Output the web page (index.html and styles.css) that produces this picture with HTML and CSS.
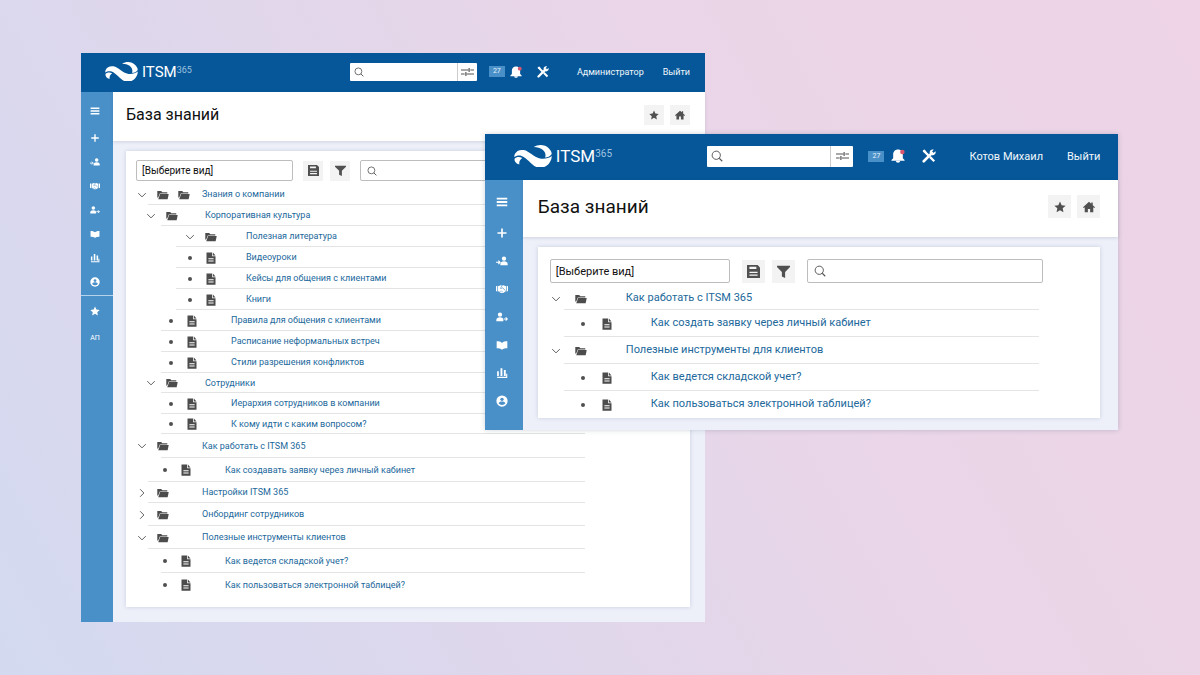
FILE: index.html
```html
<!DOCTYPE html>
<html lang="ru">
<head>
<meta charset="utf-8">
<meta name="viewport" content="width=device-width, initial-scale=1">
<title>ITSM 365 — База знаний</title>
<link rel="stylesheet" href="styles.css">
</head>
<body>
<svg class="sprite" aria-hidden="true">
  <symbol id="logo" viewBox="0 0 112 68">
    <path d="M2 27C6 18 16 13 28 15c18 3 30 23 52 26 12 1 24-1 32-8-1 21-16 35-36 35C54 67 42 40 22 33 14 30 6 32 0 36c0-4 1-7 2-9Z" fill="#fff"/>
    <path d="M1 41c5-6 15-7 23-2-6 4-10 10-9 19C6 56 0 49 1 41Z" fill="#fff"/>
    <path d="M58 6C72-3 92-2 103 10c7 8 10 13 8 18-5 6-11 9-19 9C98 22 84 6 58 6Z" fill="#fff"/>
  </symbol>
  <symbol id="search" viewBox="0 0 16 16"><circle cx="7" cy="7" r="5.5" fill="none" stroke="currentColor" stroke-width="1.3"/><path d="m11 11 4 4" stroke="currentColor" stroke-width="1.5"/></symbol>
  <symbol id="sliders" viewBox="0 0 16 12"><path d="M0 3.5h9M11.500 3.500H16M10 1v5M0 8.500h4.500M7 8.500h9M6 6v5" fill="none" stroke="currentColor" stroke-width="1.400"/></symbol>
  <symbol id="bell" viewBox="0 0 16 16"><path d="M8 .5c-3.500 0-5.500 2.500-5.500 5.500v4.500L.5 12.500V13.500h15v-1L13.500 10.500V6C13.500 3 11.500.5 8 .5Z" fill="currentColor"/><path d="M5.500 13.500h5c0 3-5 3-5 0Z" fill="currentColor"/><circle cx="13" cy="3.500" r="2.600" fill="#d9566f"/></symbol>
  <symbol id="tools" viewBox="0 0 16 16"><path d="m2.500 2.500 4.800 4.800M9 9l5 5" stroke="currentColor" stroke-width="2.600"/><path d="M1 1.500 3 .5l2 2.500-1.500 1.500L1 3Z" fill="currentColor"/><path d="M2 14 11.500 4.500" stroke="currentColor" stroke-width="3" stroke-linecap="round"/><path d="M13.500.7 11.300 3l.5 1.300 1.300.4L15.400 2.500c1 3-1.500 5.500-4.400 4.500L9 5C8 2 10.500-.2 13.500.7Z" fill="currentColor"/></symbol>
  <symbol id="menu" viewBox="0 0 16 16"><path d="M1 3.500h14M1 8h14M1 12.500h14" stroke="currentColor" stroke-width="2.400"/></symbol>
  <symbol id="plus" viewBox="0 0 16 16"><path d="M8 2v12M2 8h12" stroke="currentColor" stroke-width="2.200"/></symbol>
  <symbol id="user-in" viewBox="0 0 18 16"><circle cx="12" cy="4.500" r="3.200" fill="currentColor"/><path d="M6.500 14.500v-2c0-2.500 2.500-4 5.500-4s5.500 1.500 5.500 4v2Z" fill="currentColor"/><path d="M0 10h5M3.500 7.500 6 10l-2.500 2.500" fill="none" stroke="currentColor" stroke-width="1.600"/></symbol>
  <symbol id="user-out" viewBox="0 0 18 16"><circle cx="6" cy="4.500" r="3.200" fill="currentColor"/><path d="M.5 14.500v-2c0-2.500 2.500-4 5.500-4s5 1.500 5 4v2Z" fill="currentColor"/><path d="M11.500 11H17M14.500 8.500 17 11l-2.500 2.500" fill="none" stroke="currentColor" stroke-width="1.600"/></symbol>
  <symbol id="hands" viewBox="0 0 18 16"><path d="m0 4 2-1v9l-2-1ZM18 4l-2-1v9l2-1ZM3 4l4-1.500 2 .8 2-.8L15 4v7l-4 3H7l-4-3Z" fill="currentColor"/><path d="M9 3.500 6.500 7c1.500 1 3-.5 3.500-1l4 4.500M7 13l-1.500-2M10 13l-2-2.500" fill="none" stroke="#4a90c8"/></symbol>
  <symbol id="book" viewBox="0 0 18 16"><path d="M1 2.500c3 0 6 .5 8 2.500 2-2 5-2.500 8-2.500V13c-3 0-6 .5-8 2-2-1.500-5-2-8-2Z" fill="currentColor"/></symbol>
  <symbol id="chart" viewBox="0 0 16 16"><path d="M1.500 5.500h2.300V12H1.500ZM6 1.500h2.500V12H6ZM10.500 4H13v8h-2.500ZM1.500 13h13v1.700h-13ZM13.500 9H15v5.700h-1.500Z" fill="currentColor"/></symbol>
  <symbol id="account" viewBox="0 0 16 16"><circle cx="8" cy="8" r="7.500" fill="currentColor"/><circle cx="8" cy="5.700" r="2.200" fill="#4a90c8"/><path d="M3.500 11c1-3.300 8-3.300 9 0-2 3-7 3-9 0Z" fill="#4a90c8"/></symbol>
  <symbol id="star" viewBox="0 0 16 16"><path d="m8 .8 2.200 4.800 5.300.6-3.900 3.600 1 5.200L8 12.400 3.400 15l1-5.200L.5 6.200l5.300-.6Z" fill="currentColor"/></symbol>
  <symbol id="home" viewBox="0 0 16 16"><path d="M8 1 0 8.300l1 1.100 1.300-1.100V15h4.200v-4.500h3V15h4.200V8.300L15 9.400l1-1.100-3-2.700V2h-2v1.700Z" fill="currentColor"/></symbol>
  <symbol id="save" viewBox="0 0 16 16"><path d="M0 0h13L16 3v13H0Z" fill="currentColor"/><path d="M3 2h8.500v2.800H3ZM3 8.300h10v1.500H3ZM3 11.800h10v1.500H3Z" fill="#f6f6f6"/></symbol>
  <symbol id="filter" viewBox="0 0 16 16"><path d="M0 1h16v1.500L10 8.500V16l-4-2V8.500L0 2.500Z" fill="currentColor"/></symbol>
  <symbol id="folder" viewBox="0 0 16 14"><path d="M0 1.500h5.500L7 3h7v2H3.500L1.500 10 0 11Z" fill="currentColor"/><path d="M4 5.700h12L14.500 13H1.300Z" fill="currentColor"/></symbol>
  <symbol id="doc" viewBox="0 0 14 16"><path d="M1 .5h7.500V5.500H13V15.500H1Z" fill="currentColor"/><path d="M9.500.8 13 4.500H9.500Z" fill="currentColor"/><path d="M3.500 8.200h7v1.300h-7ZM3.500 11.300h7v1.300h-7Z" fill="#fff"/></symbol>
  <symbol id="down" viewBox="0 0 16 16"><path d="m2 5 6 6 6-6" fill="none" stroke="currentColor" stroke-width="1.500"/></symbol>
  <symbol id="right" viewBox="0 0 16 16"><path d="m5 2 6 6-6 6" fill="none" stroke="currentColor" stroke-width="1.500"/></symbol>
</svg>

<main class="desktop">
  <section class="window window--admin" aria-label="База знаний, администратор">
    <header class="topbar">
      <a class="brand" href="#"><svg class="brand-mark"><use href="#logo"/></svg><span class="brand-name">ITSM</span><span class="brand-suffix">365</span></a>
      <form class="quick-search">
        <svg class="search-icon"><use href="#search"/></svg>
        <input class="quick-input" type="search" aria-label="Поиск">
        <button class="quick-options" type="button" aria-label="Параметры поиска"><svg class="sliders"><use href="#sliders"/></svg></button>
      </form>
      <span class="badge">27</span>
      <button class="top-button top-button--bell" type="button" aria-label="Уведомления"><svg class="top-icon"><use href="#bell"/></svg></button>
      <button class="top-button top-button--tools" type="button" aria-label="Настройки"><svg class="top-icon"><use href="#tools"/></svg></button>
      <a class="top-link top-link--user" href="#">Администратор</a>
      <a class="top-link" href="#">Выйти</a>
    </header>
    <div class="workspace">
      <nav class="sidebar" aria-label="Разделы">
        <button class="side-button side-button--menu" type="button" aria-label="Меню"><svg class="side-icon"><use href="#menu"/></svg></button>
        <button class="side-button" type="button" aria-label="Добавить"><svg class="side-icon"><use href="#plus"/></svg></button>
        <button class="side-button" type="button" aria-label="Входящие"><svg class="side-icon"><use href="#user-in"/></svg></button>
        <button class="side-button" type="button" aria-label="Соглашения"><svg class="side-icon"><use href="#hands"/></svg></button>
        <button class="side-button" type="button" aria-label="Исходящие"><svg class="side-icon"><use href="#user-out"/></svg></button>
        <button class="side-button" type="button" aria-label="Справочник"><svg class="side-icon"><use href="#book"/></svg></button>
        <button class="side-button" type="button" aria-label="Отчёты"><svg class="side-icon"><use href="#chart"/></svg></button>
        <button class="side-button" type="button" aria-label="Профиль"><svg class="side-icon"><use href="#account"/></svg></button>
        <div class="side-extra">
          <button class="side-button" type="button" aria-label="Избранное"><svg class="side-icon"><use href="#star"/></svg></button>
          <button class="side-button side-button--text" type="button">АП</button>
        </div>
      </nav>
      <div class="page">
        <div class="page-head">
          <h1 class="page-title">База знаний</h1>
          <button class="tile" type="button" aria-label="В избранное"><svg class="tile-icon"><use href="#star"/></svg></button>
          <button class="tile" type="button" aria-label="Домой"><svg class="tile-icon"><use href="#home"/></svg></button>
        </div>
        <div class="card">
          <div class="toolbar">
            <select class="view-select" aria-label="Вид"><option>[Выберите вид]</option></select>
            <div class="tool-group">
              <button class="tile" type="button" aria-label="Сохранить вид"><svg class="tile-icon"><use href="#save"/></svg></button>
              <button class="tile" type="button" aria-label="Фильтр"><svg class="tile-icon"><use href="#filter"/></svg></button>
            </div>
            <div class="tree-search"><svg class="search-icon"><use href="#search"/></svg><input class="tree-input" type="search" aria-label="Поиск по базе знаний"></div>
          </div>
          <ul class="tree">
            <li class="row"><button class="toggle" type="button" aria-label="Свернуть"><svg class="chevron"><use href="#down"/></svg></button><span class="icons"><svg class="folder"><use href="#folder"/></svg><svg class="folder"><use href="#folder"/></svg></span><a class="label" href="#">Знания о компании</a></li>
            <li class="row row--sub"><button class="toggle" type="button" aria-label="Свернуть"><svg class="chevron"><use href="#down"/></svg></button><span class="icons"><svg class="folder"><use href="#folder"/></svg></span><a class="label" href="#">Корпоративная культура</a></li>
            <li class="row row--deep"><button class="toggle" type="button" aria-label="Свернуть"><svg class="chevron"><use href="#down"/></svg></button><span class="icons"><svg class="folder"><use href="#folder"/></svg></span><a class="label" href="#">Полезная литература</a></li>
            <li class="row row--deep"><span class="dot"></span><span class="icons"><svg class="doc"><use href="#doc"/></svg></span><a class="label" href="#">Видеоуроки</a></li>
            <li class="row row--deep"><span class="dot"></span><span class="icons"><svg class="doc"><use href="#doc"/></svg></span><a class="label" href="#">Кейсы для общения с клиентами</a></li>
            <li class="row row--deep"><span class="dot"></span><span class="icons"><svg class="doc"><use href="#doc"/></svg></span><a class="label" href="#">Книги</a></li>
            <li class="row row--subdoc"><span class="dot"></span><span class="icons"><svg class="doc"><use href="#doc"/></svg></span><a class="label" href="#">Правила для общения с клиентами</a></li>
            <li class="row row--subdoc"><span class="dot"></span><span class="icons"><svg class="doc"><use href="#doc"/></svg></span><a class="label" href="#">Расписание неформальных встреч</a></li>
            <li class="row row--subdoc"><span class="dot"></span><span class="icons"><svg class="doc"><use href="#doc"/></svg></span><a class="label" href="#">Стили разрешения конфликтов</a></li>
            <li class="row row--sub row--tight"><button class="toggle" type="button" aria-label="Свернуть"><svg class="chevron"><use href="#down"/></svg></button><span class="icons"><svg class="folder"><use href="#folder"/></svg></span><a class="label" href="#">Сотрудники</a></li>
            <li class="row row--subdoc"><span class="dot"></span><span class="icons"><svg class="doc"><use href="#doc"/></svg></span><a class="label" href="#">Иерархия сотрудников в компании</a></li>
            <li class="row row--subdoc row--tight"><span class="dot"></span><span class="icons"><svg class="doc"><use href="#doc"/></svg></span><a class="label" href="#">К кому идти с каким вопросом?</a></li>
            <li class="row row--tall row--open"><button class="toggle" type="button" aria-label="Свернуть"><svg class="chevron"><use href="#down"/></svg></button><span class="icons"><svg class="folder"><use href="#folder"/></svg></span><a class="label" href="#">Как работать с ITSM 365</a></li>
            <li class="row row--doc row--tall row--end"><span class="dot"></span><span class="icons"><svg class="doc"><use href="#doc"/></svg></span><a class="label" href="#">Как создавать заявку через личный кабинет</a></li>
            <li class="row"><button class="toggle" type="button" aria-label="Развернуть"><svg class="chevron"><use href="#right"/></svg></button><span class="icons"><svg class="folder"><use href="#folder"/></svg></span><a class="label" href="#">Настройки ITSM 365</a></li>
            <li class="row row--medium"><button class="toggle" type="button" aria-label="Развернуть"><svg class="chevron"><use href="#right"/></svg></button><span class="icons"><svg class="folder"><use href="#folder"/></svg></span><a class="label" href="#">Онбординг сотрудников</a></li>
            <li class="row row--medium"><button class="toggle" type="button" aria-label="Свернуть"><svg class="chevron"><use href="#down"/></svg></button><span class="icons"><svg class="folder"><use href="#folder"/></svg></span><a class="label" href="#">Полезные инструменты клиентов</a></li>
            <li class="row row--doc row--tall"><span class="dot"></span><span class="icons"><svg class="doc"><use href="#doc"/></svg></span><a class="label" href="#">Как ведется складской учет?</a></li>
            <li class="row row--doc row--tall"><span class="dot"></span><span class="icons"><svg class="doc"><use href="#doc"/></svg></span><a class="label" href="#">Как пользоваться электронной таблицей?</a></li>
          </ul>
        </div>
      </div>
    </div>
  </section>

  <section class="window window--client" aria-label="База знаний, клиент">
    <header class="topbar">
      <a class="brand" href="#"><svg class="brand-mark"><use href="#logo"/></svg><span class="brand-name">ITSM</span><span class="brand-suffix">365</span></a>
      <form class="quick-search">
        <svg class="search-icon"><use href="#search"/></svg>
        <input class="quick-input" type="search" aria-label="Поиск">
        <button class="quick-options" type="button" aria-label="Параметры поиска"><svg class="sliders"><use href="#sliders"/></svg></button>
      </form>
      <span class="badge">27</span>
      <button class="top-button top-button--bell" type="button" aria-label="Уведомления"><svg class="top-icon"><use href="#bell"/></svg></button>
      <button class="top-button top-button--tools" type="button" aria-label="Настройки"><svg class="top-icon"><use href="#tools"/></svg></button>
      <a class="top-link top-link--user" href="#">Котов Михаил</a>
      <a class="top-link" href="#">Выйти</a>
    </header>
    <div class="workspace">
      <nav class="sidebar" aria-label="Разделы">
        <button class="side-button side-button--menu" type="button" aria-label="Меню"><svg class="side-icon"><use href="#menu"/></svg></button>
        <button class="side-button" type="button" aria-label="Добавить"><svg class="side-icon"><use href="#plus"/></svg></button>
        <button class="side-button" type="button" aria-label="Входящие"><svg class="side-icon"><use href="#user-in"/></svg></button>
        <button class="side-button" type="button" aria-label="Соглашения"><svg class="side-icon"><use href="#hands"/></svg></button>
        <button class="side-button" type="button" aria-label="Исходящие"><svg class="side-icon"><use href="#user-out"/></svg></button>
        <button class="side-button" type="button" aria-label="Справочник"><svg class="side-icon"><use href="#book"/></svg></button>
        <button class="side-button" type="button" aria-label="Отчёты"><svg class="side-icon"><use href="#chart"/></svg></button>
        <button class="side-button" type="button" aria-label="Профиль"><svg class="side-icon"><use href="#account"/></svg></button>
      </nav>
      <div class="page">
        <div class="page-head">
          <h1 class="page-title">База знаний</h1>
          <button class="tile" type="button" aria-label="В избранное"><svg class="tile-icon"><use href="#star"/></svg></button>
          <button class="tile" type="button" aria-label="Домой"><svg class="tile-icon"><use href="#home"/></svg></button>
        </div>
        <div class="card">
          <div class="toolbar">
            <select class="view-select" aria-label="Вид"><option>[Выберите вид]</option></select>
            <div class="tool-group">
              <button class="tile" type="button" aria-label="Сохранить вид"><svg class="tile-icon"><use href="#save"/></svg></button>
              <button class="tile" type="button" aria-label="Фильтр"><svg class="tile-icon"><use href="#filter"/></svg></button>
            </div>
            <div class="tree-search"><svg class="search-icon"><use href="#search"/></svg><input class="tree-input" type="search" aria-label="Поиск по базе знаний"></div>
          </div>
          <ul class="tree">
            <li class="row row--tight"><button class="toggle" type="button" aria-label="Свернуть"><svg class="chevron"><use href="#down"/></svg></button><span class="icons"><svg class="folder"><use href="#folder"/></svg></span><a class="label" href="#">Как работать с ITSM 365</a></li>
            <li class="row row--doc"><span class="dot"></span><span class="icons"><svg class="doc"><use href="#doc"/></svg></span><a class="label" href="#">Как создать заявку через личный кабинет</a></li>
            <li class="row"><button class="toggle" type="button" aria-label="Свернуть"><svg class="chevron"><use href="#down"/></svg></button><span class="icons"><svg class="folder"><use href="#folder"/></svg></span><a class="label" href="#">Полезные инструменты для клиентов</a></li>
            <li class="row row--doc"><span class="dot"></span><span class="icons"><svg class="doc"><use href="#doc"/></svg></span><a class="label" href="#">Как ведется складской учет?</a></li>
            <li class="row row--doc"><span class="dot"></span><span class="icons"><svg class="doc"><use href="#doc"/></svg></span><a class="label" href="#">Как пользоваться электронной таблицей?</a></li>
          </ul>
        </div>
      </div>
    </div>
  </section>
</main>
</body>
</html>
```
FILE: styles.css
```css
* { box-sizing: border-box; }

body {
  margin: 0;
  font-family: Roboto, "Noto Sans", sans-serif;
  color: #111;
}

button, input, select { font: inherit; color: inherit; margin: 0; padding: 0; border: 0; background: none; }
button { display: flex; align-items: center; justify-content: center; cursor: pointer; }
input { min-width: 0; outline: 0; }
a { text-decoration: none; }
svg { display: block; flex: none; }
.sprite { position: absolute; width: 0; height: 0; }

.desktop {
  position: relative;
  min-height: 100vh;
  overflow: hidden;
  background: linear-gradient(60deg, #d3daf0 0%, #ded7ec 32%, #e9d6e8 60%, #eed4e6 100%);
}

/* Windows */
.window { position: absolute; background: #edf0f9; }

.window--admin {
  left: 6.75%;
  top: 53px;
  width: 52%;
  --bar: 39px;
  --side: 32px;
  --side-step: 24px;
  --side-pad: 7px;
  --icon: 10px;
  --head: 49px;
  --title: 16px;
  --edge: 15px;
  --inset: 13px;
  --tile: 20px;
  --tile-gap: 6px;
  --control: 21px;
  --small: 9px;
  --body: 10px;
  --select: 157px;
  --search: 127px;
  --search-height: 18px;
  --options: 20px;
  --mark: 33px;
  --brand: 15px;
  --suffix: 9px;
  --brand-pad: 24px;
  --card-pad: 10px;
  --card-end: 9px;
  --tree-end: 105px;
  --tool-end: 101px;
  --row: 21px;
  --row-tight: 20px;
  --gap: 9px;
  --icons: 36px;
  --line: 12px;
  --folder: 12px;
  --badge-gap: 12px;
  --bell-gap: 5px;
  --tools-gap: 15px;
  --user-gap: 28px;
  --link-gap: 19px;
}

.window--client {
  left: 40.4%;
  top: 134px;
  width: 52.8%;
  box-shadow: 0 0 5px rgba(40, 60, 90, .22);
  --bar: 46px;
  --side: 38px;
  --side-step: 28px;
  --side-pad: 8px;
  --icon: 12px;
  --head: 57px;
  --title: 19px;
  --edge: 18px;
  --inset: 15px;
  --tile: 23px;
  --tile-gap: 6px;
  --control: 24px;
  --small: 11px;
  --body: 11px;
  --select: 180px;
  --search: 146px;
  --search-height: 21px;
  --options: 23px;
  --mark: 38px;
  --brand: 17px;
  --suffix: 10px;
  --brand-pad: 29px;
  --card-pad: 12px;
  --card-end: 12px;
  --tree-end: 61px;
  --tool-end: 57px;
  --row: 27px;
  --row-tight: 23px;
  --gap: 12px;
  --icons: 40px;
  --line: 14px;
  --folder: 14px;
  --badge-gap: 15px;
  --bell-gap: 7px;
  --tools-gap: 17px;
  --user-gap: 33px;
  --link-gap: 24px;
}

/* Top bar */
.topbar {
  display: flex;
  align-items: center;
  height: var(--bar);
  padding: 0 var(--edge) 2px var(--brand-pad);
  background: #065799;
  color: #fff;
}
.brand { display: flex; align-items: center; margin-right: auto; color: #fff; }
.brand-mark { width: var(--mark); height: calc(var(--mark) * .6); margin-right: 4px; }
.brand-name { font-size: var(--brand); line-height: 20px; }
.brand-suffix { font-size: var(--suffix); line-height: 10px; padding-bottom: 4px; color: #9fc3e0; }

.quick-search {
  display: flex;
  align-items: center;
  width: var(--search);
  height: var(--search-height);
  padding-left: 4px;
  border-radius: 1px;
  background: #fff;
  color: #555;
}
.search-icon { width: var(--icon); height: var(--icon); }
.quick-input { flex: 1; height: 100%; font-size: var(--body); }
.quick-options { width: var(--options); height: 100%; border-left: 1px solid #ccc; }
.sliders { width: 13px; height: 10px; }

.badge {
  margin-left: var(--badge-gap);
  width: 16px;
  font-size: 7px;
  line-height: 11px;
  text-align: center;
  background: #4a90c8;
  color: #e6f1fa;
}
.top-button--bell { margin-left: var(--bell-gap); }
.top-button--tools { margin-left: var(--tools-gap); }
.top-icon { width: calc(var(--icon) + 2px); height: calc(var(--icon) + 2px); }
.top-link { margin-left: var(--link-gap); font-size: var(--small); color: #f1f7fc; }
.top-link--user { margin-left: var(--user-gap); }

/* Sidebar */
.workspace { display: flex; }
.sidebar { width: var(--side); flex: none; padding-top: var(--side-pad); background: #4a90c8; color: #fff; }
.side-button { width: 100%; height: var(--side-step); padding-right: 4px; }
.side-button--menu { margin-bottom: 3px; }
.side-button--text { margin-top: 3px; font-size: 7px; }
.side-icon { width: var(--icon); height: var(--icon); }
.side-extra { margin-top: 1px; padding-top: 3px; border-top: 1px solid #b4d2ea; }

/* Page */
.page { flex: 1; min-width: 0; }
.page-head {
  display: flex;
  align-items: center;
  gap: var(--tile-gap);
  height: var(--head);
  padding: 0 var(--edge) 4px var(--inset);
  background: #fff;
  box-shadow: 0 1px 3px rgba(50, 70, 110, .16);
}
.page-title { margin: 0 auto 0 0; font-size: var(--title); font-weight: 400; line-height: 24px; }
.tile { width: var(--tile); height: var(--tile); background: #f3f3f3; color: #505050; }
.tile-icon { width: var(--icon); height: var(--icon); }
.tool-group .tile-icon { width: calc(var(--icon) + 1px); height: calc(var(--icon) + 1px); }

.card {
  margin: 10px var(--edge) var(--card-end) var(--inset);
  padding: 9px 0 0 var(--card-pad);
  background: #fff;
  box-shadow: 0 0 4px rgba(50, 70, 110, .2);
}
.window--admin .card { padding-bottom: 10px; margin-bottom: 15px; }
.window--client .card { padding-top: 12px; }

.toolbar { display: flex; align-items: center; gap: 10px; margin-bottom: 3px; padding-right: var(--tool-end); }
.window--client .toolbar { gap: 12px; margin-bottom: 4px; }
.tool-group { display: flex; gap: 7px; }
.view-select, .tree-search { height: var(--control); border: 1px solid #bdbdbd; border-radius: 2px; background: #fff; }
.view-select { width: var(--select); padding-left: 5px; appearance: none; font-size: var(--body); }
.tree-search { display: flex; flex: 1; align-items: center; gap: 4px; padding-left: 6px; color: #555; }
.tree-input { flex: 1; height: 100%; font-size: var(--body); }

/* Tree */
.tree { margin: 0; padding: 0 var(--tree-end) 0 0; list-style: none; }
.row {
  display: grid;
  grid-template-columns: 12px var(--icons) 1fr;
  column-gap: var(--gap);
  align-items: center;
  height: var(--row);
  padding-left: var(--indent, 0);
  background: linear-gradient(#e4e4e4, #e4e4e4) no-repeat right bottom / calc(100% - var(--line)) 1px;
}
.row:last-child { background: none; }
.row--tight { height: var(--row-tight); }
.row--medium { height: 23px; }
.row--tall { height: 24px; }
.row--sub { --indent: 9px; --line: 25px; --icons: 30px; }
.row--subdoc { --indent: 29px; --line: 25px; }
.row--deep { --indent: 48px; --line: 40px; --icons: 32px; }
.row--open { --line: 25px; }
.window--admin .row--doc { --indent: 23px; --line: 25px; }
.window--admin .row--end { --line: 12px; }
.window--client .row--doc { --indent: 27px; --icons: 38px; }

.toggle { width: 12px; height: 12px; color: #555; }
.chevron { width: 10px; height: 10px; }
.dot { justify-self: center; width: 4px; height: 4px; border-radius: 50%; background: #505050; }
.icons { display: flex; gap: var(--gap); color: #4c4c4c; }
.folder { width: var(--folder); height: 10px; }
.doc { width: 12px; height: 12px; }
.label { font-size: var(--small); line-height: 14px; padding-bottom: 1px; white-space: nowrap; color: #21689b; }
```
